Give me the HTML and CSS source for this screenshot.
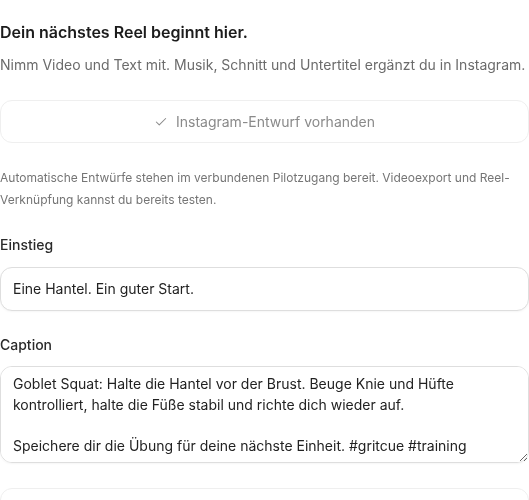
FILE: index.html
```html
<!DOCTYPE html>
<html lang="de">
<head>
    <meta charset="UTF-8">
    <meta name="viewport" content="width=device-width, initial-scale=1.0">
    <title>Reel erstellen</title>
    <link rel="stylesheet" href="styles.css">
</head>
<body>
    <div class="panel">
        <h2 class="title">Dein nächstes Reel beginnt hier.</h2>
        <p class="lead">Nimm Video und Text mit. Musik, Schnitt und Untertitel ergänzt du in Instagram.</p>

        <div class="status">
            <svg class="check" width="14" height="14" viewBox="0 0 24 24" fill="none" stroke="currentColor" stroke-width="1.8" stroke-linecap="round" stroke-linejoin="round">
                <path d="M20 6 9 17l-5-5"/>
            </svg>
            <span>Instagram-Entwurf vorhanden</span>
        </div>

        <p class="note">Automatische Entwürfe stehen im verbundenen Pilotzugang bereit. Videoexport und Reel-Verknüpfung kannst du bereits testen.</p>

        <label class="field-label" for="hook">Einstieg</label>
        <input class="field" id="hook" type="text" value="Eine Hantel. Ein guter Start.">

        <label class="field-label" for="caption">Caption</label>
        <textarea class="field area" id="caption" rows="4">Goblet Squat: Halte die Hantel vor der Brust. Beuge Knie und Hüfte kontrolliert, halte die Füße stabil und richte dich wieder auf.

Speichere dir die Übung für deine nächste Einheit. #gritcue #training</textarea>

        <div class="status next"></div>
    </div>
</body>
</html>
```

FILE: styles.css
```css
body {
    margin: 0;
    font-family: Inter, "Noto Sans", sans-serif;
    background-color: #ffffff;
    color: #1f1f1f;
}
.panel {
    width: 529px;
    padding-top: 20px;
}
.title {
    margin: 0;
    font-size: 16px;
    line-height: 24px;
    font-weight: 600;
    color: #1c1c1c;
}
.lead {
    margin: 11px 0 0;
    font-size: 14px;
    line-height: 20px;
    color: #6b6b6b;
}
.status {
    display: flex;
    justify-content: center;
    align-items: center;
    gap: 8px;
    height: 43px;
    margin-top: 25px;
    box-sizing: border-box;
    border: 1px solid #efefef;
    border-radius: 12px;
    font-size: 14px;
    color: #8a8a8a;
}
.check {
    color: #8a8a8a;
}
.note {
    margin: 24px 0 0;
    font-size: 12px;
    line-height: 22px;
    color: #757575;
}
.field-label {
    display: block;
    margin-top: 24px;
    font-size: 14px;
    line-height: 20px;
    font-weight: 500;
    color: #2a2a2a;
}
.field {
    display: block;
    width: 100%;
    box-sizing: border-box;
    margin-top: 12px;
    padding: 11px 12px;
    border: 1px solid #dedede;
    border-radius: 12px;
    font-family: inherit;
    font-size: 14px;
    line-height: 20px;
    color: #222222;
    background: #ffffff;
    box-shadow: 0 1px 2px rgba(0, 0, 0, 0.04);
}
.area {
    height: 97px;
    margin-top: 11px;
    padding: 7px 12px;
    line-height: 20.5px;
    resize: vertical;
}
.next {
    margin-top: 25px;
}
```
